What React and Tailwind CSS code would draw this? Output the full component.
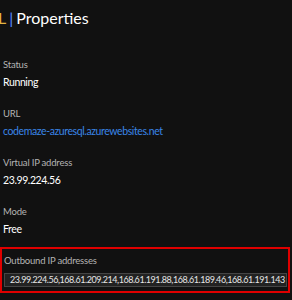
import React from 'react'

function Field({ label, children }) {
  return (
    <div className="flex flex-col">
      <p className="text-[9.5px] leading-[14px] tracking-[-0.2px] text-[#b4b4b4]">{label}</p>
      <div className="mt-[2px] text-[10.5px] leading-[16px] tracking-[-0.4px] text-white">{children}</div>
    </div>
  )
}

export default function App() {
  const font = { fontFamily: '"Segoe UI", Lato, "Noto Sans", sans-serif' }

  return (
    <div className="w-[292px] h-[300px] bg-[#111111] overflow-hidden" style={font}>
      {/* Title */}
      <h1 className="pt-[6px] -ml-[2px] text-[16px] leading-[24px] text-white whitespace-nowrap">
        <span className="text-[#e3b341]">L</span>
        <span className="text-[#5b8cff] mx-[3px]">|</span>
        Properties
      </h1>

      <div className="flex flex-col gap-[17px] pl-[3px] pt-[28px]">
        <Field label="Status">Running</Field>
        <Field label="URL">
          <span className="text-[#3a86e8]">codemaze-azuresql.azurewebsites.net</span>
        </Field>
        <Field label="Virtual IP address">23.99.224.56</Field>
        <Field label="Mode">Free</Field>
      </div>

      {/* Outbound addresses, highlighted */}
      <div className="mt-[10px] w-[290px] border-2 border-[#e00000] pt-[5px] pb-[4px] pl-[1px] pr-[1px]">
        <p className="pl-[1px] text-[9.5px] leading-[14px] tracking-[-0.2px] text-[#b4b4b4]">Outbound IP addresses</p>
        <div className="mt-[5px] ml-[1px] border border-[#454545] bg-[#222222] pl-[5px] h-[14px] flex items-center overflow-hidden">
          <span className="text-[9px] leading-[12px] tracking-[-0.45px] text-[#e6e6e6] whitespace-nowrap">
            23.99.224.56,168.61.209.214,168.61.191.88,168.61.189.46,168.61.191.143
          </span>
        </div>
      </div>
    </div>
  )
}
